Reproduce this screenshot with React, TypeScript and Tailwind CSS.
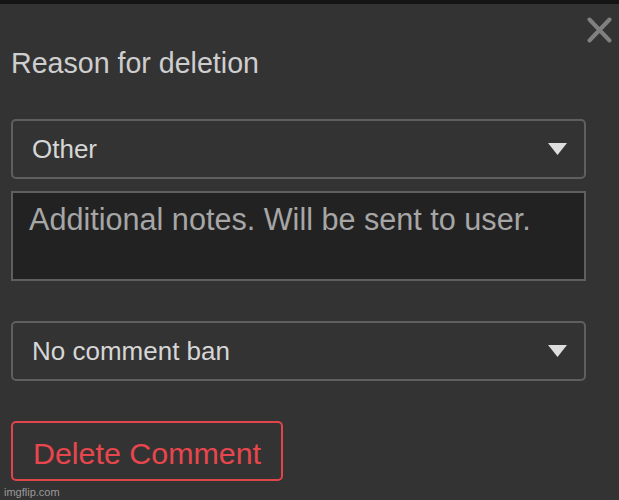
import React, { useState } from "react";

const reasons = ["Spam", "Harassment", "Off topic", "Other"];
const bans = ["No comment ban", "1 day ban", "1 week ban", "Permanent ban"];

const Caret = () => (
  <svg width="19" height="12" viewBox="0 0 19 12" className="shrink-0">
    <polygon points="0,0 19,0 9.5,12" fill="#dedede" />
  </svg>
);

const FakeSelect = ({ value }: { value: string }) => (
  <button
    type="button"
    className="flex h-[60px] w-full items-center justify-between rounded-[5px] border-2 border-[#5f5f5f] bg-[#333333] pl-[19px] pr-[17px] text-left text-[26px] leading-[30px] text-[#d6d6d6]"
  >
    <span>{value}</span>
    <Caret />
  </button>
);

export default function App() {
  const [reason] = useState(reasons[3]);
  const [ban] = useState(bans[0]);

  return (
    <div className="relative min-h-[500px] w-full border-t-4 border-[#141414] bg-[#333333] font-['Liberation_Sans',Arial,sans-serif]">
      {/* close */}
      <button type="button" className="absolute right-[7px] top-[13px] p-0" aria-label="Close">
        <svg width="25" height="26" viewBox="0 0 25 26">
          <path d="M2.5 2.5 L22.5 23.5 M22.5 2.5 L2.5 23.5" stroke="#808080" strokeWidth="4" strokeLinecap="round" />
        </svg>
      </button>

      <div className="flex flex-col pl-[11px] pr-[33px] pt-[43px]">
        <h2 className="text-[28.6px] font-normal leading-[32px] text-[#cecece]">Reason for deletion</h2>

        <div className="mt-[40px]">
          <FakeSelect value={reason} />
        </div>

        <textarea
          placeholder="Additional notes. Will be sent to user."
          className="mt-[12px] h-[90px] w-full resize-none border-2 border-[#5f5f5f] bg-[#222222] pl-[16px] pt-[8px] text-[30.6px] leading-[36px] text-[#dddddd] outline-none placeholder:text-[#a6a6a6]"
        />

        <div className="mt-[40px]">
          <FakeSelect value={ban} />
        </div>

        <button
          type="button"
          className="mt-[40px] flex h-[60px] w-[272px] items-center rounded-[5px] border-2 border-[#e2444b] pl-[20px] pt-[3px] text-[30.4px] leading-[34px] text-[#e8464d]"
        >
          Delete Comment
        </button>
      </div>

      <span className="absolute bottom-[2px] left-[4px] text-[11px] leading-[12px] text-[#9a9a9a]">imgflip.com</span>
    </div>
  );
}
